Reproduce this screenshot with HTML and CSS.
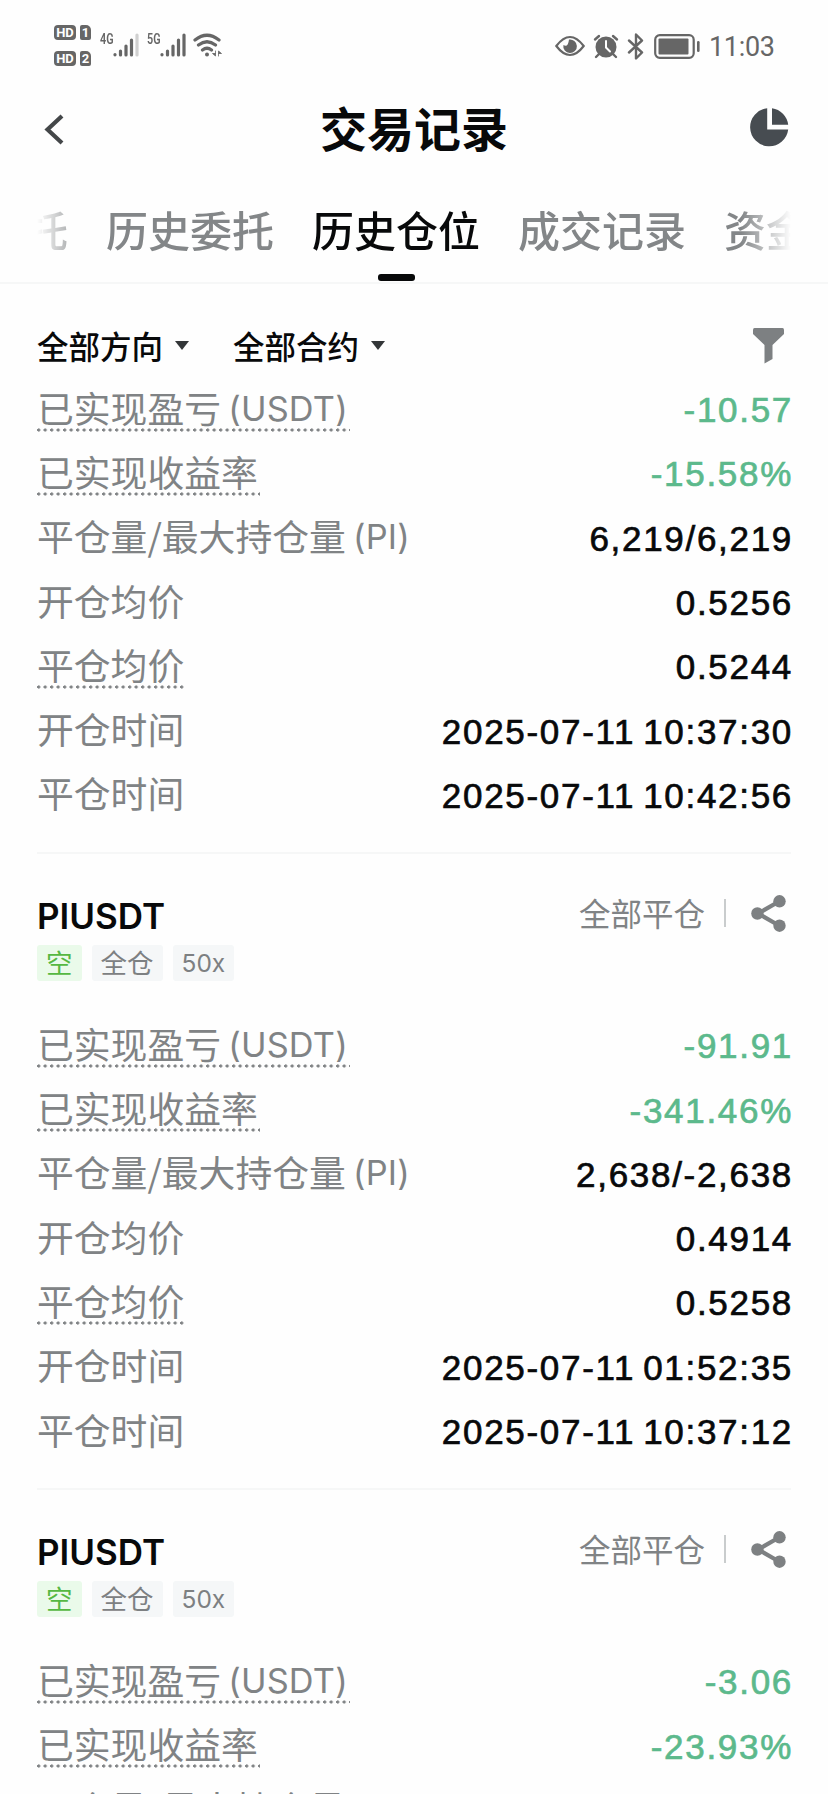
FILE: index.html
```html
<!DOCTYPE html>
<html lang="zh-CN">
<head>
<meta charset="utf-8">
<title>交易记录</title>
<link rel="stylesheet" href="styles.css">
</head>
<body>
<svg class="defs" width="0" height="0">
  <symbol id="share" viewBox="0 0 36 37"><path d="M28 6.5 7 18.5 28 30.5" fill="none" stroke="#7d8082" stroke-width="4.2"/><g fill="#7d8082"><circle cx="28.5" cy="6.3" r="6.2"/><circle cx="6.4" cy="18.5" r="6.2"/><circle cx="28.5" cy="30.7" r="6.2"/></g></symbol>
</svg>
<div class="status">
  <div class="sims">
    <div class="sim"><span class="hd">HD</span><span class="slot">1</span></div>
    <div class="sim"><span class="hd">HD</span><span class="slot">2</span></div>
  </div>
  <span class="net">4G</span>
  <svg class="bars" width="26" height="24" viewBox="0 0 26 24" stroke="#666" stroke-width="3.2" stroke-linecap="round"><path d="M2 21.6v.2M7.500 18v4M13 13v9M18.500 7v15"/><path d="M24 2v20" stroke="#d0d0d0"/></svg>
  <span class="net net5">5G</span>
  <svg class="bars" width="26" height="24" viewBox="0 0 26 24" stroke="#666" stroke-width="3.200" stroke-linecap="round"><path d="M2 21.600v.2M7.500 18v4M13 13v9M18.500 7v15M24 2v20"/></svg>
  <svg class="wifi" width="29" height="25" viewBox="0 0 29 25" fill="none" stroke="#666" stroke-width="3.2" stroke-linecap="round"><path d="M2 7Q14 -2.500 26 7M5.500 12Q14 5.500 22.500 12M9.500 17Q14 13.500 18.500 17"/><circle cx="14" cy="21.500" r="2" fill="#666" stroke="none"/><path d="M22.500 18v5l-3-2.500h3M25.500 23v-5l3 2.500h-3" stroke-width=".8" fill="#666"/></svg>
  <div class="status-right">
    <svg width="30" height="22" viewBox="0 0 30 22"><path d="M1.300 11Q15-7 28.700 11Q15 29 1.300 11Z" fill="none" stroke="#666" stroke-width="2.200"/><path d="M14 4.500A6.800 6.800 0 1 1 8.400 10Q13 13 14 4.500Z" fill="#666"/></svg>
    <svg class="alarm" width="26" height="25" viewBox="0 0 26 25"><g fill="none" stroke="#666" stroke-width="2.400" stroke-linecap="round"><path d="M2 5.500 6 2M20 2l4 3.500M6 20l-3 3M20 20l3 3"/></g><circle cx="13" cy="13" r="10.500" fill="#666"/><path d="M13 7v6.500l4 4" fill="none" stroke="#fff" stroke-width="2" stroke-linecap="round"/></svg>
    <svg class="bt" width="18" height="27" viewBox="0 0 18 27" fill="none" stroke="#666" stroke-width="2.400" stroke-linejoin="round" stroke-linecap="round"><path d="M2 7.500 15 19.500 9 25.500V1.500L15 7.500 2 19.500"/></svg>
    <svg class="battery" width="46" height="25" viewBox="0 0 46 25"><rect x="1.200" y="1.200" width="38.500" height="22.600" rx="4.500" fill="none" stroke="#666" stroke-width="2.200"/><rect x="4.500" y="4.500" width="30" height="16" rx="1" fill="#666"/><rect x="43" y="7" width="2.600" height="11" rx="1.300" fill="#666"/></svg>
    <span class="time">11:03</span>
  </div>
</div>
<header class="header">
  <svg class="back" width="20" height="31" viewBox="0 0 20 31"><path d="M18 2 3.500 15.500 18 29" fill="none" stroke="#444749" stroke-width="4.200"/></svg>
  <h1 class="title">交易记录</h1>
  <svg class="pie" width="39" height="39" viewBox="0 0 39 39" fill="#474c51"><path d="M17.200 .2A19.100 19.100 0 1 0 38.200 21.500H17.200Z"/><path d="M22 .2A19.100 19.100 0 0 1 38.200 16.800H22Z"/></svg>
</header>
<nav class="tabs"><div class="tabs-view"><div class="tabs-track">
  <span class="tab">托</span><span class="tab">历史委托</span><span class="tab active">历史仓位</span><span class="tab">成交记录</span><span class="tab">资金</span>
</div></div></nav>
<div class="filters">
  <span class="filter">全部方向</span><span class="filter">全部合约</span>
  <svg class="funnel" width="31" height="36" viewBox="0 0 31 36"><path d="M1.500 0H29.500Q31 0 31 2V6L19.500 17V31L11.500 35.500V17L0 6V2Q0 0 1.500 0Z" fill="#7d8082"/></svg>
</div>
<main class="list">
  <section class="card">
    <div class="row"><span class="label hint">已实现盈亏 <i>(USDT)</i></span><span class="value down">-10.57</span></div>
    <div class="row"><span class="label hint">已实现收益率</span><span class="value down">-15.58%</span></div>
    <div class="row"><span class="label">平仓量/最大持仓量 <i>(PI)</i></span><span class="value">6,219/6,219</span></div>
    <div class="row"><span class="label">开仓均价</span><span class="value">0.5256</span></div>
    <div class="row"><span class="label hint">平仓均价</span><span class="value">0.5244</span></div>
    <div class="row"><span class="label">开仓时间</span><span class="value">2025-07-11 10:37:30</span></div>
    <div class="row"><span class="label">平仓时间</span><span class="value">2025-07-11 10:42:56</span></div>
  </section>
  <section class="card">
    <div class="head"><h2 class="symbol">PIUSDT</h2><span class="state">全部平仓</span><span class="bar"></span><svg class="share" width="36" height="37"><use href="#share"/></svg></div>
    <div class="tags"><span class="tag short">空</span><span class="tag">全仓</span><span class="tag lev">50x</span></div>
    <div class="row"><span class="label hint">已实现盈亏 <i>(USDT)</i></span><span class="value down">-91.91</span></div>
    <div class="row"><span class="label hint">已实现收益率</span><span class="value down">-341.46%</span></div>
    <div class="row"><span class="label">平仓量/最大持仓量 <i>(PI)</i></span><span class="value">2,638/-2,638</span></div>
    <div class="row"><span class="label">开仓均价</span><span class="value">0.4914</span></div>
    <div class="row"><span class="label hint">平仓均价</span><span class="value">0.5258</span></div>
    <div class="row"><span class="label">开仓时间</span><span class="value">2025-07-11 01:52:35</span></div>
    <div class="row"><span class="label">平仓时间</span><span class="value">2025-07-11 10:37:12</span></div>
  </section>
  <section class="card">
    <div class="head"><h2 class="symbol">PIUSDT</h2><span class="state">全部平仓</span><span class="bar"></span><svg class="share" width="36" height="37"><use href="#share"/></svg></div>
    <div class="tags"><span class="tag short">空</span><span class="tag">全仓</span><span class="tag lev">50x</span></div>
    <div class="row"><span class="label hint">已实现盈亏 <i>(USDT)</i></span><span class="value down">-3.06</span></div>
    <div class="row"><span class="label hint">已实现收益率</span><span class="value down">-23.93%</span></div>
    <div class="row"><span class="label">平仓量/最大持仓量 <i>(PI)</i></span></div>
  </section>
</main>
</body>
</html>
```
FILE: styles.css
```css
* { box-sizing: border-box; }
body {
  margin: 0;
  width: 828px;
  height: 1794px;
  overflow: hidden;
  display: flex;
  flex-direction: column;
  background: #fefefe;
  color: #08090a;
  font-family: "Noto Sans CJK SC", sans-serif;
}
.defs { position: absolute; }
svg { flex: none; }

/* status bar */
.status { height: 80px; padding: 0 54px; display: flex; align-items: flex-start; color: #666; flex: none; }
.sims { display: flex; flex-direction: column; gap: 11px; padding-top: 25px; }
.sim { display: flex; gap: 4px; height: 15px; }
.hd, .slot { background: #666; color: #fff; border-radius: 4px; font: 700 13px/15px "Roboto", sans-serif; text-align: center; }
.hd { width: 22px; }
.slot { width: 11px; border-radius: 2px 5px 2px 2px; }
.net { font: 600 15px/16px "Roboto", sans-serif; margin: 31px 0 0 9px; width: 13px; transform: scaleX(.72); transform-origin: left; }
.net5 { margin-left: 8px; }
.bars { margin-top: 33px; }
.wifi { margin: 33px 0 0 7px; }
.status-right { margin-left: auto; display: flex; align-items: center; height: 92px; }
.alarm { margin-left: 8px; }
.bt { margin-left: 8px; }
.battery { margin-left: 9px; }
.time { font: 400 27px/32px "Roboto", sans-serif; margin-left: 9px; width: 65px; white-space: nowrap; padding-top: 2px; letter-spacing: -.3px; }

/* title */
.header { height: 100px; padding: 0 39px 2px 44px; display: grid; grid-template-columns: 39px 1fr 39px; align-items: center; flex: none; }
.title { margin: 0 0 5px -5px; font-size: 47px; line-height: 60px; font-weight: 700; text-align: center; }
.pie { margin-bottom: 3px; }

/* tabs */
.tabs { height: 104px; border-bottom: 2px solid #f6f7f7; padding: 0 37px; flex: none; }
.tabs-view {
  height: 104px;
  overflow: hidden;
  -webkit-mask-image: linear-gradient(90deg, transparent, #000 50px, #000 704px, transparent);
  mask-image: linear-gradient(90deg, transparent, #000 50px, #000 704px, transparent);
}
.tabs-track { display: flex; gap: 38px; margin-left: -11px; }
.tab { flex: none; height: 102px; padding-top: 19px; font-size: 42px; line-height: 60px; font-weight: 500; color: #838688; }
.active { color: #08090a; display: flex; flex-direction: column; align-items: center; }
.active::after { content: ""; width: 37px; height: 7px; border-radius: 3px; background: #08090a; margin-top: 15px; }

/* filters */
.filters { height: 94px; padding: 32px 44px 0 37px; display: flex; align-items: flex-start; flex: none; }
.filter { display: flex; align-items: center; width: 196px; font-size: 31.5px; line-height: 58px; font-weight: 500; }
.filter::after { content: ""; margin-left: 12px; border: 7px solid transparent; border-top: 9px solid #333638; border-bottom: 0; }
.funnel { margin: 12px 0 0 auto; }

/* position cards */
.list { padding: 0 37px; }
.card { border-bottom: 2px solid #f6f7f7; padding-bottom: 24px; margin-bottom: 42px; }
.row { display: flex; justify-content: space-between; align-items: center; height: 64.3px; }
.label { position: relative; font-size: 36.8px; line-height: 54px; padding-bottom: 7px; color: #808385; white-space: pre; }
.label i { display: inline-block; font: 400 34.300px/40px "Inter", sans-serif; margin-left: -1px; letter-spacing: .2px; transform: translateY(-2px); }
.hint::after {
  content: "";
  position: absolute;
  left: 0; right: -2px; bottom: 9px;
  height: 4px;
  background: radial-gradient(circle at 1.700px 2px, #808385 1.300px, transparent 1.900px) 0 0 / 6.500px 4px repeat-x;
}
.value { font: 400 35px/44px "Liberation Sans", Arial, sans-serif; letter-spacing: 1.700px; word-spacing: -3.500px; -webkit-text-stroke: .7px currentColor; margin-right: -2px; white-space: nowrap; }
.down { color: #5cb98c; }
.head { display: flex; align-items: center; height: 40px; }
.symbol { margin: 0 auto 0 0; font: 600 35px/40px "Inter", sans-serif; }
.state { font-size: 31.5px; line-height: 40px; padding-bottom: 8px; color: #808385; }
.bar { width: 2px; height: 28px; background: #c9cccd; margin: 0 25px 6px 19px; }
.share { margin: 0 4px 5px 0; }
.tags { display: flex; gap: 10px; height: 36px; margin: 9px 0 33px; }
.tag { padding: 0 9px; font-size: 26.500px; line-height: 33px; color: #7d8082; background: #f5f7f8; border-radius: 3px; }
.short { color: #56b842; background: #eafaea; }
.lev { font: 400 24.500px/36px "Inter", sans-serif; }
```
